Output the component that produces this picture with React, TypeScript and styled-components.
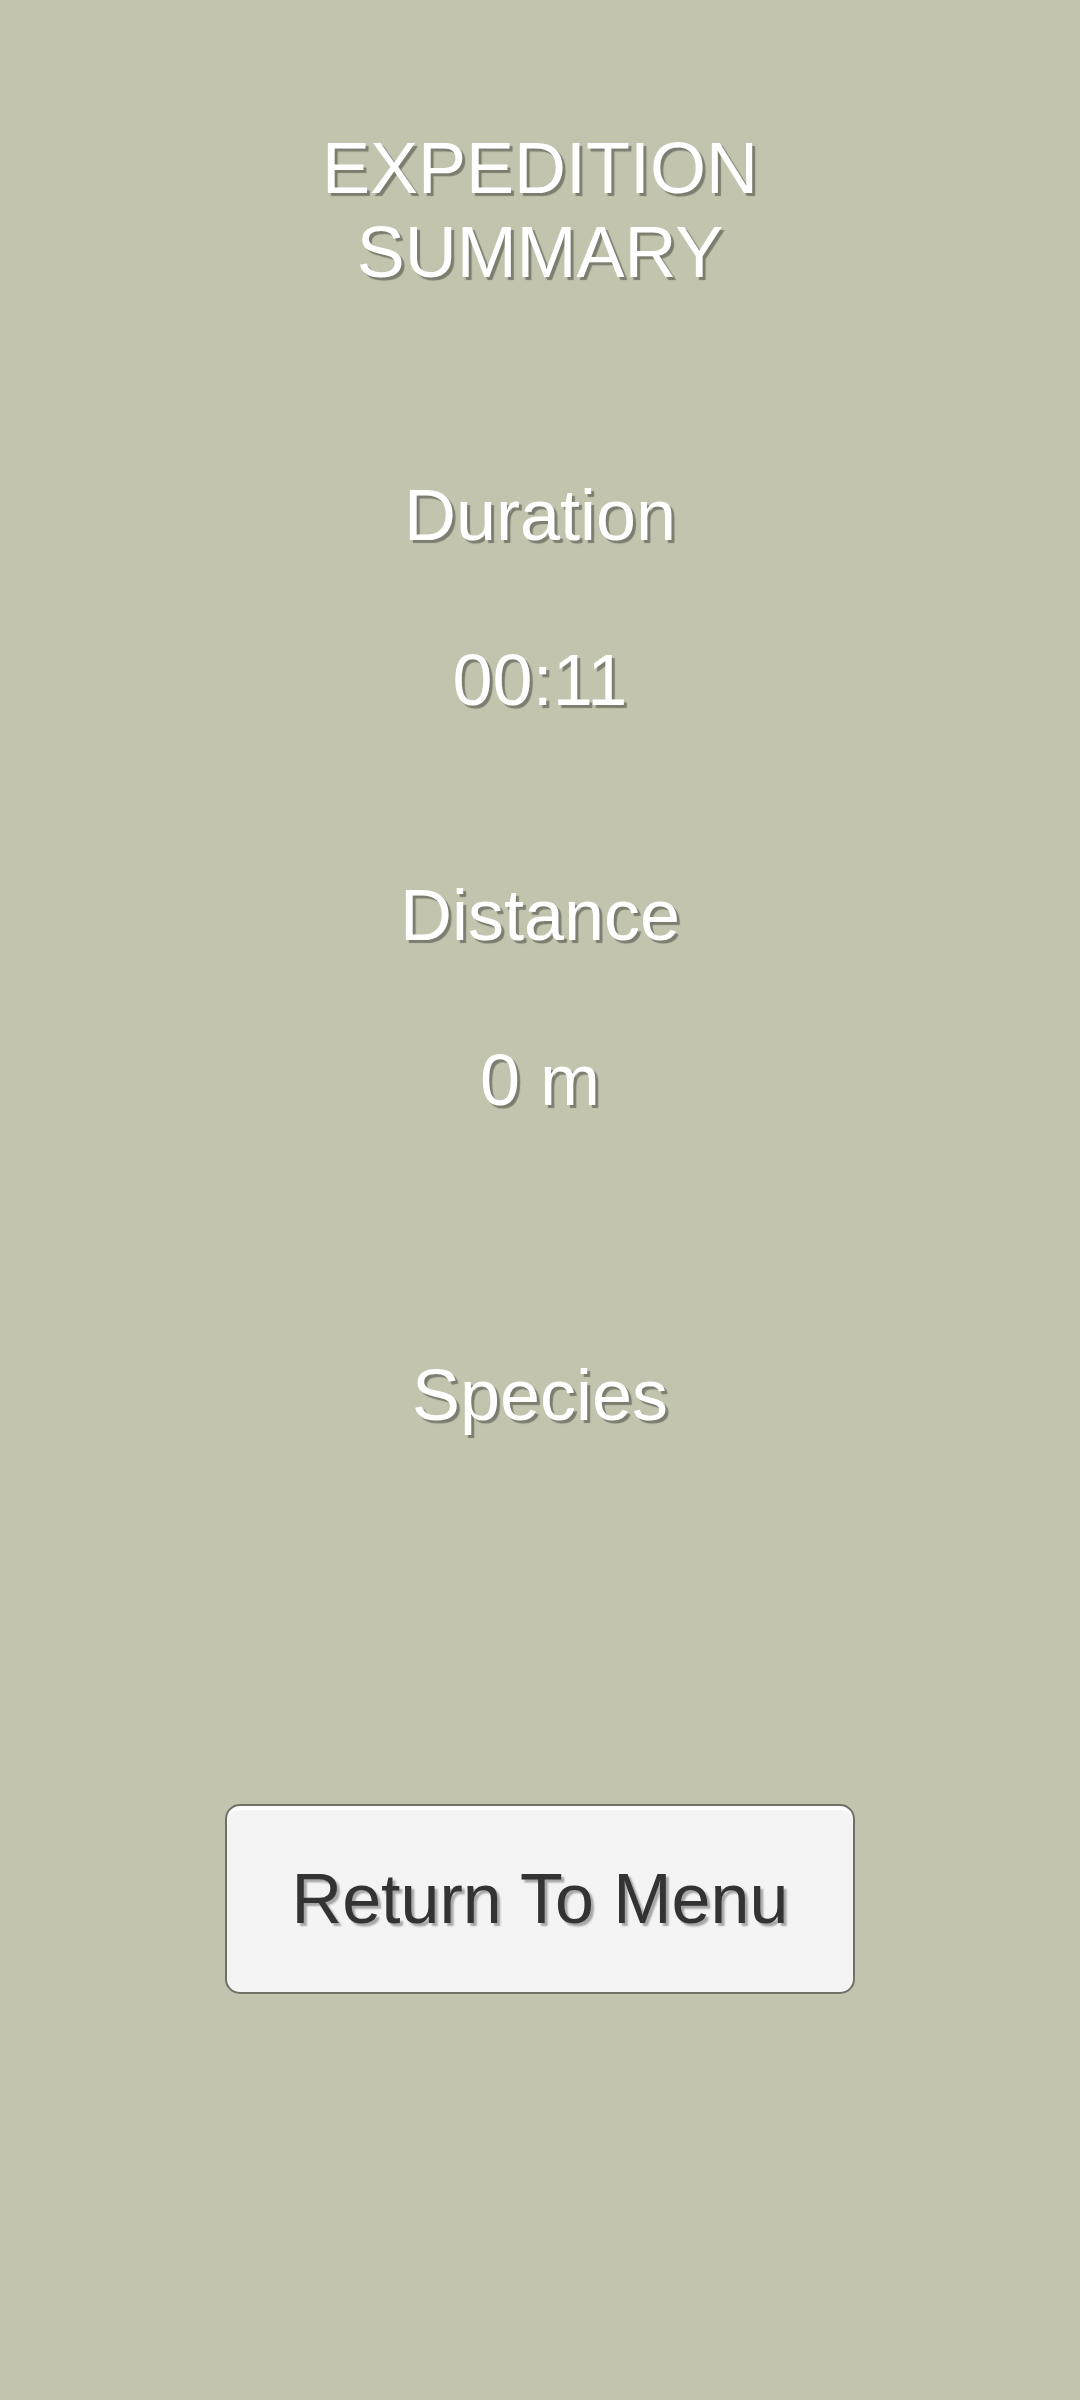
import { FC } from "react";
import styled, { createGlobalStyle } from "styled-components";

const GlobalStyle = createGlobalStyle`
  html, body {
    margin: 0;
    padding: 0;
    background: #c2c4ae;
  }

  body {
    font-family: "Liberation Sans", Arial, sans-serif;
  }
`;

const SScreen = styled.main`
  min-height: 2400px;
  display: flex;
  flex-direction: column;
  align-items: center;
  padding-top: 126px;
  box-sizing: border-box;
  color: #fff;
  text-align: center;
`;

const STitle = styled.h1`
  margin: 0;
  font-size: 72px;
  font-weight: 400;
  line-height: 84px;
  text-shadow: 3px 3px 1px rgba(0, 0, 0, 0.36);
`;

const SStat = styled.section<{ $offset: number }>`
  display: flex;
  flex-direction: column;
  align-items: center;
  gap: 81px;
  margin-top: ${(p) => p.$offset}px;
`;

const SLine = styled.div`
  font-size: 72px;
  line-height: 84px;
  text-shadow: 3px 3px 1px rgba(0, 0, 0, 0.36);
`;

const SMenuButton = styled.button`
  margin-top: 367px;
  width: 630px;
  height: 190px;
  box-sizing: border-box;
  border: 2px solid #707068;
  border-radius: 15px;
  background: #f4f4f4;
  box-shadow: inset 0 4px 0 #ffffff;
  color: #333;
  font-family: "Liberation Sans", Arial, sans-serif;
  font-size: 70px;
  line-height: 84px;
  text-shadow: 3px 3px 2px rgba(0, 0, 0, 0.32);
  cursor: pointer;
`;

const stats = [
  { label: "Duration", value: "00:11", offset: 179 },
  { label: "Distance", value: "0 m", offset: 151 },
];

const App: FC = () => {
  return (
    <>
      <GlobalStyle />
      <SScreen>
        <STitle>
          EXPEDITION
          <br />
          SUMMARY
        </STitle>
        {stats.map((s) => (
          <SStat key={s.label} $offset={s.offset}>
            <SLine>{s.label}</SLine>
            <SLine>{s.value}</SLine>
          </SStat>
        ))}
        <SStat $offset={231}>
          <SLine>Species</SLine>
        </SStat>
        <SMenuButton type="button">Return To Menu</SMenuButton>
      </SScreen>
    </>
  );
};

export default App;
